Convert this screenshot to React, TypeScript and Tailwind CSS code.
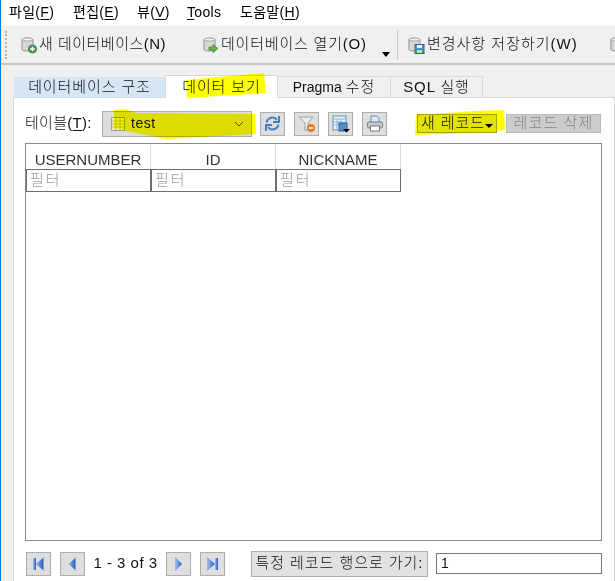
import type { ReactNode } from "react"

const KR = "font-['Liberation_Sans','Noto_Sans_CJK_KR',sans-serif]"

function U({ children }: { children: ReactNode }) {
    return <span className="underline underline-offset-2">{children}</span>
}

function DbIcon({ badge }: { badge: "new" | "open" | "save" | "none" }) {
    return (
        <svg width="18" height="18" viewBox="0 0 18 18" className="shrink-0">
            <path d="M2 3.5C2 1.8 13 1.8 13 3.5V13.5C13 15.5 2 15.5 2 13.5Z" fill="#d8d8d8" stroke="#8f8f8f" />
            <ellipse cx="7.5" cy="3.5" rx="5" ry="1.6" fill="#f4f4f4" stroke="#a5a5a5" />
            {badge === "new" && (
                <>
                    <circle cx="12.5" cy="13" r="4" fill="#4aa564" stroke="#2f7d46" />
                    <path d="M12.5 10.8V15.2M10.3 13H14.7" stroke="#fff" strokeWidth="1.3" />
                </>
            )}
            {badge === "open" && <path d="M7 11H11V8.5L16 12.5L11 16.5V14H7Z" fill="#66b04a" stroke="#3f8a2c" strokeWidth="0.8" />}
            {badge === "save" && (
                <>
                    <rect x="8" y="8.5" width="9" height="9" fill="#4f8fce" stroke="#2d639c" />
                    <rect x="10" y="9" width="5" height="3" fill="#eef4fb" />
                    <rect x="10" y="14" width="5" height="3" fill="#b7e3a8" />
                </>
            )}
        </svg>
    )
}

function Squarebtn({ children }: { children: ReactNode }) {
    return (
        <div className="w-[25px] h-[24px] bg-[#dfdfdf] border border-[#adadad] flex items-center justify-center shrink-0">
            {children}
        </div>
    )
}

function NavIcon({ dir }: { dir: "first" | "prev" | "next" | "last" }) {
    const left = dir === "first" || dir === "prev"
    const bar = dir === "first" || dir === "last"
    return (
        <svg width="13" height="14" viewBox="0 0 13 14">
            <defs>
                <linearGradient id={"nav" + dir} x1="0" x2="1" y1="0" y2="0">
                    <stop offset="0" stopColor="#9dbdf0" />
                    <stop offset="1" stopColor="#2558bd" />
                </linearGradient>
            </defs>
            {left ? (
                <path d={bar ? "M11.5 0.5V13.5L4 7Z" : "M9.5 0.5V13.5L3 7Z"} fill={"url(#nav" + dir + ")"} stroke="#7fa4de" strokeWidth="0.5" />
            ) : (
                <path d={bar ? "M1.5 0.5V13.5L9 7Z" : "M3.5 0.5V13.5L10 7Z"} fill={"url(#nav" + dir + ")"} stroke="#7fa4de" strokeWidth="0.5" />
            )}
            {bar && <rect x={left ? 1 : 9} y="1" width="3" height="12" fill={"url(#nav" + dir + ")"} />}
        </svg>
    )
}

function TableCell({ label }: { label: string }) {
    return (
        <div className="w-[125px] shrink-0">
            <div className="h-[25px] flex items-end justify-center border-r border-[#d9d9d9] text-[15px] leading-[18px] text-[#333]">
                {label}
            </div>
            <div className="h-[23px] border border-[#6f6f6f] flex items-center pl-[3px] text-[15px] text-[#999] tracking-[2px] font-light">
                필터
            </div>
        </div>
    )
}

export default function App() {
    return (
        <div className={`relative w-[615px] h-[581px] overflow-hidden bg-white border-l border-l-[#0078d7] text-[#111] ${KR}`}>
            {/* Menu */}
            <div className="h-[24px] flex items-center pl-[8px] text-[14px] tracking-[0.3px] text-black">
                <span className="w-[64px]">파일(<U>F</U>)</span>
                <span className="w-[64px]">편집(<U>E</U>)</span>
                <span className="w-[50px]">뷰(<U>V</U>)</span>
                <span className="w-[53px]"><U>T</U>ools</span>
                <span>도움말(<U>H</U>)</span>
            </div>

            {/* Toolbar */}
            <div className="h-[40px] mt-[1px] bg-[#f0f0f0] border-t border-t-[#f8f8f8] border-b-2 border-b-[#c4c4c4] flex items-center pl-[4px] text-[15px] font-light">
                <div className="w-[3px] h-[28px] border-l-2 border-dotted border-[#b5b5b5] mr-[13px]" />
                <div className="flex items-center gap-[1px] w-[182px] shrink-0 tracking-[0.5px]">
                    <DbIcon badge="new" />
                    <span className="whitespace-nowrap">새 데이터베이스(N)</span>
                </div>
                <div className="flex items-center gap-[1px] w-[195px] shrink-0 relative tracking-[0.8px]">
                    <DbIcon badge="open" />
                    <span className="whitespace-nowrap">데이터베이스 열기(O)</span>
                    <span className="absolute right-[7px] top-[19px] border-x-[4px] border-x-transparent border-t-[5px] border-t-black" />
                </div>
                <div className="w-px h-[30px] bg-[#c9c9c9] mr-[9px] shrink-0" />
                <div className="flex items-center gap-[2px] w-[202px] shrink-0 tracking-[1px]">
                    <DbIcon badge="save" />
                    <span className="whitespace-nowrap">변경사항 저장하기(W)</span>
                </div>
                <DbIcon badge="none" />
            </div>

            {/* Body */}
            <div className="h-[517px] bg-[#f0f0f0] pl-[12px] relative">
                {/* Tabs */}
                <div className="h-[32px] flex items-end text-[15px] tracking-[0.9px] font-light">
                    <div className="h-[20px] w-[151px] ml-[1px] bg-[#d5e6f6] border-t border-[#e2e2e2] flex items-center justify-center">데이터베이스 구조</div>
                    <div className="relative z-10 h-[23px] -mb-px w-[113px] bg-white border-x border-t border-[#d9d9d9] flex items-center justify-center">데이터 보기</div>
                    <div className="h-[21px] w-[113px] bg-[#f0f0f0] border-t border-r border-[#d9d9d9] flex items-center justify-center">
                        <span className="tracking-normal text-[14px] mr-[4px]">Pragma</span>수정
                    </div>
                    <div className="h-[21px] w-[92px] bg-[#f0f0f0] border-t border-r border-[#d9d9d9] flex items-center justify-center">SQL 실행</div>
                </div>

                {/* Panel */}
                <div className="h-[486px] bg-white border-x border-t border-[#d9d9d9] pl-[11px] pr-[12px]">
                    <div className="h-[45px] pt-[6px] flex items-center">
                        <span className="text-[15px] tracking-[0.3px] w-[77px] font-light whitespace-nowrap">테이블(<U>T</U>):</span>
                        <div className="w-[150px] h-[26px] bg-[#dcdcdc] border border-[#adadad] flex items-center pl-[8px] pr-[7px] text-[14px] tracking-[0.5px]">
                            <svg width="14" height="14" viewBox="0 0 14 14" className="mr-[6px]">
                                <rect x="0.5" y="0.5" width="13" height="13" fill="#f5f0a8" stroke="#8ba3b8" />
                                <path d="M1 4H13M1 7H13M1 10H13M5 1V13M9 1V13" stroke="#b1b04a" strokeWidth="0.8" />
                            </svg>
                            <span className="flex-1">test</span>
                            <svg width="10" height="6" viewBox="0 0 10 6"><path d="M1 1L5 5L9 1" fill="none" stroke="#555" /></svg>
                        </div>
                        <div className="flex gap-[9px] ml-[8px]">
                            <Squarebtn>
                                <svg width="17" height="17" viewBox="0 0 17 17" fill="none" stroke="#3c86d0" strokeWidth="2">
                                    <path d="M2.5 7.5C3 4 7 1.5 11 3L13 5" />
                                    <path d="M14.5 9.5C14 13 10 15.5 6 14L4 12" />
                                    <path d="M15 1V7H9" strokeWidth="1.5" stroke="#1f5fa8" />
                                    <path d="M2 16V10H8" strokeWidth="1.5" stroke="#1f5fa8" />
                                </svg>
                            </Squarebtn>
                            <Squarebtn>
                                <svg width="18" height="18" viewBox="0 0 18 18">
                                    <path d="M1 2H15L10 8V14L7 16V8Z" fill="#ececec" stroke="#a3a3a3" />
                                    <circle cx="13" cy="13" r="4" fill="#ea7a24" />
                                    <rect x="10.8" y="12.2" width="4.4" height="1.6" fill="#fff" />
                                </svg>
                            </Squarebtn>
                            <Squarebtn>
                                <svg width="18" height="18" viewBox="0 0 18 18">
                                    <rect x="1" y="1" width="13" height="14" fill="#eef4fb" stroke="#5d8fc7" />
                                    <path d="M1 4H14M1 7H14M1 10H14M5 4V15M9 4V15" stroke="#8bb0da" />
                                    <rect x="7" y="8" width="8" height="8" fill="#4f8fce" stroke="#2d639c" />
                                    <path d="M11 14H18L14.5 17.5Z" fill="#000" />
                                </svg>
                            </Squarebtn>
                            <Squarebtn>
                                <svg width="18" height="18" viewBox="0 0 18 18">
                                    <path d="M5 1H11L13 3V8H5Z" fill="#dbe9f8" stroke="#5d8fc7" />
                                    <rect x="1.5" y="7" width="15" height="6" rx="1.5" fill="#c9c9c9" stroke="#767676" />
                                    <rect x="4.5" y="11" width="9" height="5" fill="#fff" stroke="#767676" />
                                </svg>
                            </Squarebtn>
                        </div>
                        <div className="ml-[30px] w-[80px] h-[19px] bg-[#e3e300] border border-[#a3a300] flex items-center justify-center text-[15px] tracking-[0.9px] font-light whitespace-nowrap">
                            <span>새 레코드</span>
                            <span className="border-x-[4px] border-x-transparent border-t-[4px] border-t-black mt-[5px]" />
                        </div>
                        <div className="ml-[9px] w-[95px] h-[19px] bg-[#cccccc] border border-[#bbbbbb] flex items-center justify-center text-[15px] tracking-[1.1px] font-light text-[#838383] whitespace-nowrap">
                            레코드 삭제
                        </div>
                    </div>

                    {/* Grid */}
                    <div className="h-[398px] border border-[#8a8a8a] flex items-start">
                        <TableCell label="USERNUMBER" />
                        <TableCell label="ID" />
                        <TableCell label="NICKNAME" />
                    </div>

                    {/* Pager */}
                    <div className="h-[40px] pt-[5px] flex items-center pl-px">
                        <Squarebtn><NavIcon dir="first" /></Squarebtn>
                        <div className="ml-[9px]"><Squarebtn><NavIcon dir="prev" /></Squarebtn></div>
                        <span className="w-[81px] text-center text-[15px] tracking-[0.5px] whitespace-nowrap">1 - 3 of 3</span>
                        <Squarebtn><NavIcon dir="next" /></Squarebtn>
                        <div className="ml-[9px]"><Squarebtn><NavIcon dir="last" /></Squarebtn></div>
                        <div className="ml-[26px] w-[177px] h-[26px] bg-[#e1e1e1] border border-[#adadad] flex items-center justify-center text-[15px] tracking-[0.95px] font-light whitespace-nowrap">
                            특정 레코드 행으로 가기:
                        </div>
                        <div className="ml-[8px] w-[166px] h-[21px] border border-[#7a7a7a] flex items-center pl-[4px] text-[14px]">1</div>
                    </div>
                </div>
            </div>

            {/* Marker strokes drawn over the screenshot */}
            <svg width="615" height="581" className="absolute left-0 top-0 z-20 pointer-events-none mix-blend-multiply">
                <path d="M185 80L263 73L265 93L186 98Z" fill="#ffff00" />
                <path d="M113 110L125 109L135 113L254 114L255 134L165 139L125 131L113 127Z" fill="#ffff00" />
                <path d="M415 115L473 111L503 110L504 130L470 133L414 135Z" fill="#ffff00" />
            </svg>
        </div>
    )
}
